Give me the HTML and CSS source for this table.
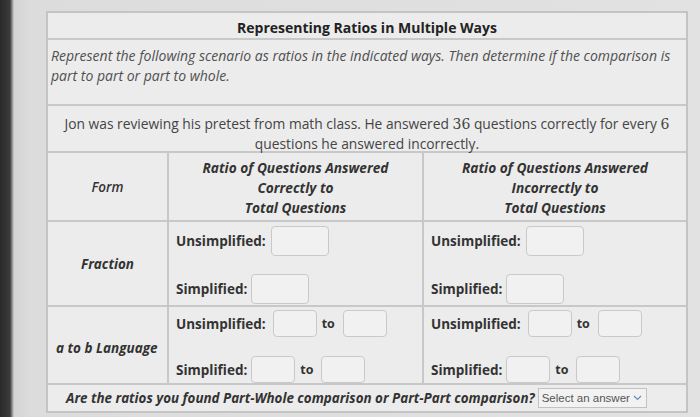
FILE: index.html
```html
<!DOCTYPE html>
<html>
<head>
<meta charset="utf-8">
<link rel="stylesheet" href="styles.css">
</head>
<body>
<div class="page">
  <div class="sheet">
    <div class="title">Representing Ratios in Multiple Ways</div>
    <div class="instr">Represent the following scenario as ratios in the indicated ways. Then determine if the comparison is part to part or part to whole.</div>
    <div class="scenario">Jon was reviewing his pretest from math class. He answered <span class="num">36</span> questions correctly for every <span class="num">6</span> questions he answered incorrectly.</div>
    <table class="grid">
      <colgroup><col class="c1"><col class="c2"><col class="c3"></colgroup>
      <tr class="head">
        <th class="form">Form</th>
        <th>Ratio of Questions Answered<br>Correctly to<br>Total Questions</th>
        <th>Ratio of Questions Answered<br>Incorrectly to<br>Total Questions</th>
      </tr>
      <tr class="frac">
        <td class="form">Fraction</td>
        <td>
          <div class="line first"><span class="lbl">Unsimplified:</span><span class="box big"></span></div>
          <div class="line"><span class="lbl">Simplified:</span><span class="box big"></span></div>
        </td>
        <td>
          <div class="line first"><span class="lbl">Unsimplified:</span><span class="box big"></span></div>
          <div class="line"><span class="lbl">Simplified:</span><span class="box big"></span></div>
        </td>
      </tr>
      <tr class="atob">
        <td class="form ab">a to b Language</td>
        <td>
          <div class="line first"><span class="lbl">Unsimplified:</span><span class="box sm gap"></span><span class="to">to</span><span class="box sm"></span></div>
          <div class="line"><span class="lbl">Simplified:</span><span class="box sm"></span><span class="to">to</span><span class="box sm"></span></div>
        </td>
        <td>
          <div class="line first"><span class="lbl">Unsimplified:</span><span class="box sm gap"></span><span class="to">to</span><span class="box sm"></span></div>
          <div class="line"><span class="lbl">Simplified:</span><span class="box sm"></span><span class="to">to</span><span class="box sm"></span></div>
        </td>
      </tr>
    </table>
    <div class="question">Are the ratios you found Part-Whole comparison or Part-Part comparison? <span class="select">Select an answer <svg width="9" height="6" viewBox="0 0 9 6"><path d="M1 1 L4.5 4.5 L8 1" fill="none" stroke="#6b8ac0" stroke-width="1.2"/></svg></span></div>
  </div>
</div>
</body>
</html>
```
FILE: styles.css
```css
html, body {
  margin: 0;
  padding: 0;
}
body {
  width: 700px;
  height: 417px;
  overflow: hidden;
  background: linear-gradient(to right, #2a2a2a 0, #3a3a3a 10px, #d4d4d4 14px, #dcdcdc 30px, #e2e2e2 100%);
  font-family: "Open Sans", "DejaVu Sans", sans-serif;
  color: #333;
}
.page {
  padding: 11px 12px 0 46px;
}
.sheet {
  width: 638px;
  border: 2px solid #c4c4c4;
  background: #ececec;
}
.title {
  height: 25px;
  line-height: 29px;
  overflow: hidden;
  text-align: center;
  font-weight: 700;
  font-size: 14px;
  color: #222;
  border-bottom: 2px solid #c8c8c8;
}
.instr {
  height: 58px;
  padding: 6px 4px 0 3px;
  font-style: italic;
  font-size: 14px;
  line-height: 20px;
  color: #505050;
  border-bottom: 2px solid #c8c8c8;
}
.scenario {
  height: 37px;
  padding: 8px 8px 0 8px;
  text-align: center;
  font-size: 13.8px;
  line-height: 20px;
  color: #444;
  border-bottom: 2px solid #c8c8c8;
}
.num {
  font-family: "DejaVu Serif", "Liberation Serif", serif;
  font-size: 14px;
}
.grid {
  width: 100%;
  border-collapse: collapse;
  table-layout: fixed;
}
.c1 { width: 120px; }
.c2 { width: 255px; }
.grid th, .grid td {
  border: 2px solid #c8c8c8;
  padding: 0;
}
.grid tr:first-child th { border-top: none; }
.grid tr > :first-child { border-left: none; }
.grid tr > :last-child { border-right: none; }
.head th {
  height: 64px;
  padding-top: 3px;
  font-weight: 700;
  font-style: italic;
  font-size: 13.7px;
  line-height: 20px;
  color: #333;
  text-align: center;
  vertical-align: middle;
}
.grid .form {
  text-align: center;
  vertical-align: middle;
  font-weight: 700;
  font-style: italic;
  font-size: 13.5px;
  color: #333;
}
.head th.form { font-weight: 600; padding-top: 0; height: 67px; }
.frac td { height: 83px; vertical-align: top; }
.atob td { height: 76px; vertical-align: top; }
.grid .atob .form.ab { height: 70px; padding: 6px 0 0 8px; text-align: left; vertical-align: middle; }
.grid td .line {
  display: flex;
  align-items: center;
  padding-left: 7px;
  margin-top: 18px;
}
.grid td .line.first { margin-top: 4px; }
.atob td .line { margin-top: 19px; }
.atob td .line.first { margin-top: 3px; }
.lbl {
  font-weight: 700;
  font-size: 13.5px;
  color: #333;
}
.box {
  display: inline-block;
  background: #f1f1f1;
  border: 1px solid #c9c9c9;
  border-radius: 4px;
  box-sizing: border-box;
}
.box.big { width: 58px; height: 30px; margin-left: 4px; }
.frac td .line.first .box.big { margin-left: 5px; }
.box.sm { width: 44px; height: 27px; margin-left: 4px; }
.box.gap { margin-left: 7px; }
.to {
  font-weight: 700;
  font-size: 12.5px;
  color: #333;
  margin: 0 4px 0 5px;
}
.question {
  height: 26px;
  display: flex;
  align-items: center;
  padding-left: 18px;
  font-weight: 700;
  font-style: italic;
  font-size: 13.4px;
  color: #333;
}
.select {
  display: inline-flex;
  align-items: center;
  gap: 3px;
  margin-left: 3px;
  height: 18px;
  padding: 0 4px 0 3px;
  border: 1px solid #c2c2c2;
  background: #f2f2f2;
  font-family: "Liberation Sans", Arial, sans-serif;
  font-weight: 400;
  font-style: normal;
  font-size: 11.5px;
  color: #555;
}
```
